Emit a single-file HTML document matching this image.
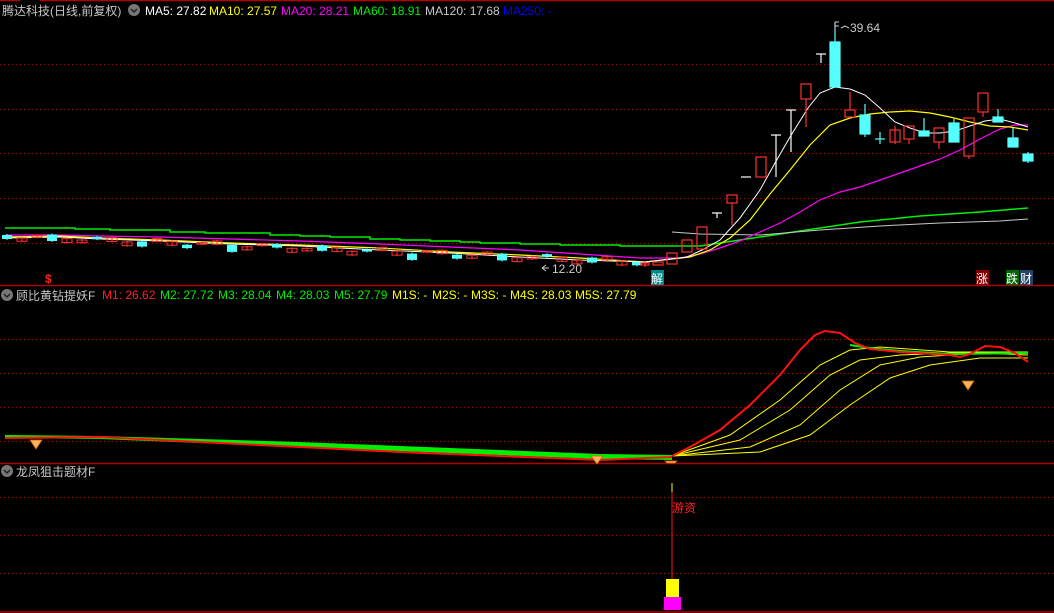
<!DOCTYPE html>
<html><head><meta charset="utf-8"><style>
html,body{margin:0;padding:0;background:#000;width:1054px;height:613px;overflow:hidden}
svg{display:block}
text{font-family:"Liberation Sans","Noto Sans CJK SC",sans-serif;font-size:12px}
</style></head><body>
<svg id="s" width="1054" height="613" xmlns="http://www.w3.org/2000/svg">
<rect width="1054" height="613" fill="#000"/>
<g stroke="#a00000" stroke-dasharray="1,3" stroke-width="1">
<line x1="0" y1="64.5" x2="1054" y2="64.5"/><line x1="0" y1="109.5" x2="1054" y2="109.5"/>
<line x1="0" y1="153.5" x2="1054" y2="153.5"/><line x1="0" y1="198.5" x2="1054" y2="198.5"/>
<line x1="0" y1="243.5" x2="1054" y2="243.5"/>
<line x1="0" y1="339.5" x2="1054" y2="339.5"/><line x1="0" y1="373.5" x2="1054" y2="373.5"/>
<line x1="0" y1="407.5" x2="1054" y2="407.5"/><line x1="0" y1="441.5" x2="1054" y2="441.5"/>
<line x1="0" y1="497.5" x2="1054" y2="497.5"/><line x1="0" y1="535.5" x2="1054" y2="535.5"/>
<line x1="0" y1="573.5" x2="1054" y2="573.5"/>
</g>
<g stroke="#b00000" stroke-width="1.5">
<line x1="0" y1="285.5" x2="1054" y2="285.5"/><line x1="0" y1="463.5" x2="1054" y2="463.5"/><line x1="0" y1="612" x2="1054" y2="612"/>
<line x1="0" y1="0.5" x2="20" y2="0.5"/><line x1="40" y1="0.5" x2="1054" y2="0.5"/>
</g>
<polyline fill="none" stroke="#00ee00" stroke-width="1.5" points="5,228 75,228 75,229 110,229 110,230 170,230 170,232 205,232 205,233 270,233 270,235 300,235 300,236 330,236 330,237 370,237 370,239 400,239 400,240 430,240 430,241 460,241 460,242 480,242 480,243 520,243 520,244 560,244 560,245 620,245 620,246 680,246 700,246 740,240 800,231 860,222 920,216 980,212 1028,208"/>
<polyline fill="none" stroke="#c8c8c8" stroke-width="1" points="672,232 700,234 760,235 820,230 880,226 940,223 1000,221 1028,219"/>
<polyline fill="none" stroke="#ff00ff" stroke-width="1.2" points="5,235 60,235 100,236 160,237 230,239 300,241 380,244 450,247 520,250 580,254 640,258 680,258 700,254 720,248 740,241 760,232 780,223 800,212 820,200 840,192 860,187 880,180 900,173 920,166 940,159 960,150 980,139 1000,129 1015,125 1028,125"/>
<polyline fill="none" stroke="#ffff00" stroke-width="1.2" points="5,237 60,236 100,238 160,240 230,243 300,245 380,248 450,252 520,255 580,258 645,262 690,257 710,250 730,238 750,220 770,194 790,170 810,145 830,125 850,118 870,114 890,112 910,111 930,113 950,117 970,122 990,126 1010,127 1028,130"/>
<polyline fill="none" stroke="#ffffff" stroke-width="1" points="5,238 60,237 100,239 160,241 230,244 300,246 380,250 450,253 520,257 580,260 645,262 687,257 702,250 720,240 740,218 760,190 775,163 790,137 808,108 820,93 835,87 850,89 865,95 880,108 895,122 910,128 925,133 940,133 955,131 970,126 985,121 1000,119 1015,123 1028,127"/>
<g id="lc"></g>
<g stroke-width="1.2">
<g stroke="#ff3030" fill="none">
<line x1="645" y1="262" x2="645" y2="267"/><rect x="641" y="263" width="8" height="2"/>
<rect x="653" y="262" width="10" height="3"/>
<rect x="667" y="253" width="10" height="11"/>
<rect x="682" y="240" width="10" height="12"/>
<rect x="697" y="227" width="10" height="22"/>
<rect x="727" y="195" width="10" height="8"/><line x1="732" y1="203" x2="732" y2="225"/>
<rect x="756" y="157" width="10" height="20"/>
<rect x="801" y="84" width="10" height="15"/><line x1="806" y1="99" x2="806" y2="127"/>
<rect x="845" y="110" width="10" height="7"/><line x1="850" y1="92" x2="850" y2="110"/>
<rect x="890" y="130" width="10" height="12"/><line x1="895" y1="126" x2="895" y2="144"/>
<rect x="904" y="126" width="10" height="13"/><line x1="909" y1="139" x2="909" y2="144"/>
<rect x="934" y="128" width="10" height="14"/><line x1="939" y1="142" x2="939" y2="149"/>
<rect x="964" y="118" width="10" height="38"/><line x1="969" y1="156" x2="969" y2="159"/>
<rect x="978" y="93" width="10" height="19"/><line x1="983" y1="112" x2="983" y2="117"/>
</g>
<g stroke="#fff" fill="none">
<line x1="712" y1="213" x2="722" y2="213"/><line x1="717" y1="213" x2="717" y2="218"/>
<line x1="741" y1="177" x2="751" y2="177"/>
<line x1="771" y1="135" x2="781" y2="135"/><line x1="776" y1="135" x2="776" y2="177"/>
<line x1="786" y1="110" x2="796" y2="110"/><line x1="791" y1="110" x2="791" y2="152"/>
<line x1="816" y1="54" x2="826" y2="54"/><line x1="821" y1="54" x2="821" y2="63"/>
</g>
<g stroke="#55ffff" fill="#55ffff">
<line x1="835" y1="22" x2="835" y2="42"/><rect x="830" y="42" width="10" height="45"/>
<line x1="865" y1="104" x2="865" y2="137"/><rect x="860" y="115" width="10" height="19"/>
<line x1="875" y1="139" x2="885" y2="139"/><line x1="880" y1="132" x2="880" y2="144"/>
<line x1="924" y1="118" x2="924" y2="131"/><rect x="919" y="131" width="10" height="5"/>
<line x1="954" y1="119" x2="954" y2="123"/><rect x="949" y="123" width="10" height="19"/>
<line x1="998" y1="109" x2="998" y2="117"/><rect x="993" y="117" width="10" height="5"/>
<line x1="1013" y1="128" x2="1013" y2="138"/><rect x="1008" y="138" width="10" height="9"/>
<line x1="1028" y1="152" x2="1028" y2="163"/><rect x="1023" y="154" width="10" height="7"/>
</g>
</g>
<path d="M835 22 V30 M835 22 H839 M835 26 H839 M841 28 l4 -2 l4 2" stroke="#ccc" fill="none" stroke-width="1"/>
<text x="850" y="32" fill="#ccc">39.64</text>
<path d="M549 268 H542 M542 268 l4 -3 M542 268 l4 3" stroke="#ccc" fill="none"/>
<text x="552" y="273" fill="#ccc">12.20</text>
<text x="45" y="283" fill="#ff2020" font-weight="bold" font-size="12">$</text>
<rect x="651" y="270" width="13" height="15" fill="#008888"/><text x="651" y="283" fill="#fff">解</text>
<rect x="976" y="270" width="13" height="15" fill="#800000"/><text x="976" y="283" fill="#fff">涨</text>
<rect x="1006" y="270" width="13" height="15" fill="#006600"/><text x="1006" y="283" fill="#fff">跌</text>
<rect x="1020" y="270" width="13" height="15" fill="#224466"/><text x="1020" y="283" fill="#fff">财</text>
<text x="2" y="15" fill="#c8c8c8" font-size="13">腾达科技(日线,前复权)</text>
<circle cx="134" cy="10" r="6" fill="#777"/><path d="M131 9 l3 3 l3 -3" stroke="#222" fill="none" stroke-width="1.5"/>
<text x="145" y="15" fill="#fff">MA5: 27.82</text>
<text x="209" y="15" fill="#ffff00">MA10: 27.57</text>
<text x="281" y="15" fill="#ff00ff">MA20: 28.21</text>
<text x="353" y="15" fill="#00ee00">MA60: 18.91</text>
<text x="425" y="15" fill="#c8c8c8">MA120: 17.68</text>
<text x="503" y="15" fill="#0000ff">MA250: -</text>
<circle cx="7" cy="295" r="6" fill="#777"/><path d="M4 294 l3 3 l3 -3" stroke="#222" fill="none" stroke-width="1.5"/>
<text x="16" y="300" fill="#c8c8c8" font-size="13">顾比黄钻提妖F</text>
<text x="102" y="299" fill="#ff2020">M1: 26.62</text>
<text x="160" y="299" fill="#00ee00">M2: 27.72</text>
<text x="218" y="299" fill="#00ee00">M3: 28.04</text>
<text x="276" y="299" fill="#00ee00">M4: 28.03</text>
<text x="334" y="299" fill="#00ee00">M5: 27.79</text>
<text x="392" y="299" fill="#ffff00">M1S: -</text>
<text x="432" y="299" fill="#ffff00">M2S: -</text>
<text x="471" y="299" fill="#ffff00">M3S: -</text>
<text x="510" y="299" fill="#ffff00">M4S: 28.03</text>
<text x="575" y="299" fill="#ffff00">M5S: 27.79</text>
<polygon points="5,435 100,436 200,439 300,442 400,446 500,450 600,454 672,455 672,460 600,459 500,455 400,451 300,447 200,443 100,439 5,438" fill="#00ee00"/>
<polyline fill="none" stroke="#ff1010" stroke-width="2" points="5,438 100,437 200,442 300,447 400,452 500,456 600,460 672,457"/>
<g fill="none" stroke="#ffff00" stroke-width="1">
<polyline points="672,456 730,435 780,400 820,365 850,350 880,347 950,352 1028,352"/>
<polyline points="672,456 740,440 790,410 830,375 860,360 900,355 950,353 1028,353"/>
<polyline points="672,456 750,447 800,425 840,390 880,365 920,357 980,353 1028,355"/>
<polyline points="672,456 760,452 810,435 850,405 890,378 930,365 980,358 1028,358"/>
</g>
<polyline fill="none" stroke="#00ee00" stroke-width="2" points="850,345 870,348 900,351 950,354 1028,353"/>
<polyline fill="none" stroke="#ff1010" stroke-width="2" points="672,456 690,447 720,430 750,405 780,375 800,350 815,335 825,331 840,333 855,343 870,349 900,352 950,355 960,357 970,354 985,346 1000,347 1015,353 1028,362"/>
<g fill="#ffb060" stroke="#cc6600" stroke-width="0.8">
<path d="M30 440 h12 l-6 9z"/><path d="M591 456 h12 l-6 8z"/><path d="M665 461 h12 l-2 2 h-8z"/><path d="M962 381 h12 l-6 9z"/>
</g>
<circle cx="7" cy="471" r="6" fill="#777"/><path d="M4 470 l3 3 l3 -3" stroke="#222" fill="none" stroke-width="1.5"/>
<text x="16" y="476" fill="#c8c8c8" font-size="13">龙凤狙击题材F</text>
<line x1="672" y1="483" x2="672" y2="492" stroke="#ffff00"/>
<line x1="672" y1="492" x2="672" y2="580" stroke="#ff1010"/>
<text x="672" y="512" fill="#ff2020">游资</text>
<rect x="666" y="579" width="13" height="18" fill="#ffff00"/>
<rect x="664" y="597" width="17" height="13" fill="#ff00ff"/>
</svg>
<script>
(function(){
var g=document.getElementById('lc'),h='';
for(var i=0;i<43;i++){
 var x=7+15*i, base=235+i*0.6, s=Math.sin(i*1.7), c=Math.cos(i*2.3);
 var y=base+s*2.5, hgt=1.5+Math.abs(c)*2.5, up=(i*7)%3!==0;
 if(i%6==3) hgt+=3;
 var col=up?'#ff3030':'#55ffff';
 h+='<line x1="'+x+'" y1="'+(y-1)+'" x2="'+x+'" y2="'+(y+hgt+1)+'" stroke="'+col+'"/>';
 if(up) h+='<rect x="'+(x-5)+'" y="'+y+'" width="10" height="'+hgt+'" fill="none" stroke="'+col+'"/>';
 else h+='<rect x="'+(x-5)+'" y="'+y+'" width="10" height="'+hgt+'" fill="'+col+'"/>';
}
g.innerHTML=h;
})();
</script>
</body></html>
